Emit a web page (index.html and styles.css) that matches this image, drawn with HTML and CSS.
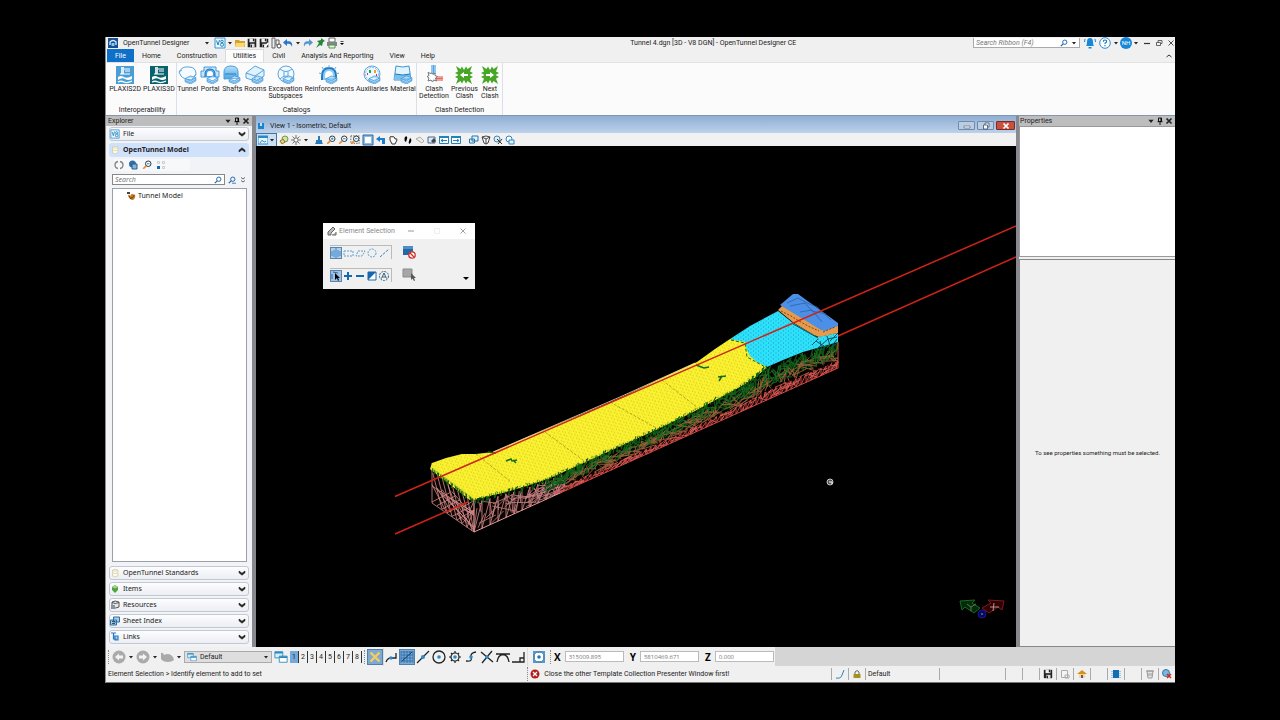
FILE: index.html
```html
<!DOCTYPE html>
<html lang="en">
<head>
<meta charset="utf-8">
<title>Tunnel 4.dgn [3D - V8 DGN] - OpenTunnel Designer CE</title>
<link rel="stylesheet" href="styles.css">
</head>
<body>
<svg class="defs" aria-hidden="true">
  <defs>
    <linearGradient id="sky" x1="0" y1="0" x2="0" y2="1"><stop offset="0" stop-color="#b9e3fa"/><stop offset="1" stop-color="#4ba3e0"/></linearGradient>
    <symbol id="i-caret" viewBox="0 0 6 6"><path d="M1 2h4L3 4.500z" fill="#222"/></symbol>
    <symbol id="i-chev" viewBox="0 0 8 6"><path d="M1 1l3 2.200L7 1v1.800L4 5.200 1 2.800z" fill="#222" stroke="#222" stroke-width=".6"/></symbol>
    <symbol id="i-pin" viewBox="0 0 8 8"><path d="M2.500 1h3v3.500h-3zM1.500 4.700h5M4 5v3" fill="none" stroke="#111"/><path d="M4.500 1h1v3.500h-1z"/></symbol>
    <symbol id="i-x" viewBox="0 0 8 8"><path d="M1.500 1.500l5 5M6.500 1.500l-5 5" stroke="currentColor" stroke-width="var(--w,1.700)" fill="none"/></symbol>
    <symbol id="i-mag" viewBox="0 0 10 10"><circle cx="6" cy="4" r="2.700" fill="none" stroke="#1c64a8" stroke-width="1.200"/><path d="M4 6L1 9" stroke="#1c64a8" stroke-width="1.500"/></symbol>
    <symbol id="i-zoom" viewBox="0 0 12 12"><circle cx="7.500" cy="4.500" r="3.300" fill="#fff" stroke="#27343f" stroke-width="1.200"/><path d="M5 7L1.500 10.500" stroke="#e88a2a" stroke-width="2"/><path d="M6 4.500h3" stroke="#1c7fd0" stroke-width="1.200"/></symbol>
    <symbol id="i-slab" viewBox="0 0 14 10"><path d="M1 4l6-3 6 2-6 3.500zM1 4v2l6 2.500 6-3.500V3M1 6v1.500L7 10l6-3.500V5" fill="#b5def8" stroke="#3c93d8" stroke-width=".8"/></symbol>
    <symbol id="i-burst" viewBox="0 0 20 20"><path d="M2 1l4.500 3L8 1.500l2 3.500 2-3.500L13.500 4 18 1l-2 5.500 3 1.500-3.500 2 3.500 2-3 1.500 2 5.500-4.500-3-1.500 2.500-2-3.500-2 3.500L6.500 16 2 19l2-5.500L1 12l3.500-2L1 8l3-1.500z" fill="#48a626"/></symbol>
    <symbol id="i-save" viewBox="0 0 12 12"><path d="M1 1h10v10H1z" fill="#222"/><path d="M3 1h6v4H3z" fill="#eee"/><path d="M4 7h5v4H4z" fill="#ddd"/><path d="M7 1h1.500v3H7zM4.500 8H6v3H4.500z" fill="#222"/></symbol>
    <symbol id="i-undo" viewBox="0 0 12 10"><path d="M5 1L1 4.500 5 8V5.700h2q2 0 3 3 1-5-3-5.500H5z" fill="#2577c8"/></symbol>
    <symbol id="i-views" viewBox="0 0 16 14"><path d="M1 1h9v7H1z" fill="#d8effb" stroke="#2b8ac4"/><path d="M1 2h9" stroke="#2b8ac4" stroke-width="2"/><path d="M6 6h9v7H6z" fill="#fff" stroke="#2b8ac4"/><path d="M6 7h9" stroke="#2b8ac4" stroke-width="2"/></symbol>
    <symbol id="i-dgn" viewBox="0 0 12 12"><path d="M1 1h10v10H1z" fill="#e9f6fd" stroke="#3a97cc"/><path d="M2.500 3.500L4 8l1.500-5" fill="none" stroke="#2583bd"/><circle cx="8" cy="4.500" r="1.300" fill="none" stroke="#2583bd"/><circle cx="8" cy="7.700" r="1.600" fill="none" stroke="#2583bd"/></symbol>
    <symbol id="i-db" viewBox="0 0 12 12"><path d="M3 2.500q4-2 6.500 0v7q-3 2-6.500 0z" fill="#fdfae8" stroke="#cfcbb0"/><path d="M3 3q3 1.500 6.500 0M3 6q3 1.500 6.500 0" fill="none" stroke="#d9d4b4"/></symbol>
    <symbol id="i-plaxis" viewBox="0 0 20 20"><path d="M1 1h18v18H1z"/><path d="M6 2h3v7H6z" fill="#fff" opacity=".8"/><path d="M9 4h6M10 6h5M5 9h10" stroke="#fff" stroke-width="1"/><path d="M3 12q3-2 6 0t8-1v3q-4 2-7 0t-7 1z" fill="#fff"/><path d="M3 17q3-1.500 6 0t8-1" stroke="#fff" fill="none" stroke-width="1.300"/></symbol>
  </defs>
</svg>

<div class="app">
  <header class="titlebar">
    <div class="quick">
      <svg class="i12" viewBox="0 0 12 12"><path d="M1 1h10v10H1z" fill="#164f8d"/><path d="M3 8V5q3-3 6 0v3" fill="none" stroke="#d7ecff" stroke-width="1.300"/><path d="M4.500 6h3v3h-3z" fill="#8dc5ef"/></svg>
      <span class="picker workflow"><select aria-label="Workflow"><option>OpenTunnel Designer</option></select><svg class="i6"><use href="#i-caret"/></svg></span>
      <svg class="i12"><use href="#i-dgn"/></svg>
      <svg class="i6"><use href="#i-caret"/></svg>
      <svg class="i12" viewBox="0 0 12 12"><path d="M1 3h4l1 1h5v6H1z" fill="#dba02c"/><path d="M2 6h9l-1 4H1z" fill="#fbd76d"/></svg>
      <svg class="i12" viewBox="-1 -1 14 14"><use href="#i-save" width="12" height="12"/></svg>
      <svg class="i12" viewBox="-1 -1 14 14"><use href="#i-save" width="12" height="12"/><path d="M7 11l4-5" stroke="#fff" stroke-width="2"/></svg>
      <svg class="i12" viewBox="0 0 12 12"><path d="M2 1h3v10H2zM6 3h3v5H6z" fill="#eee" stroke="#666"/><circle cx="9" cy="9" r="2" fill="#fff" stroke="#444"/></svg>
      <svg class="i12" viewBox="0 0 12 10"><use href="#i-undo"/></svg>
      <svg class="i6"><use href="#i-caret"/></svg>
      <svg class="i12" viewBox="0 0 12 10"><g transform="matrix(-1 0 0 1 12 0)" opacity=".75"><use href="#i-undo"/></g></svg>
      <svg class="i12" viewBox="0 0 12 12"><path d="M7 1l4 3-2 1-1 4-2-1-4 3 3-5-2-2 4-1z" fill="#26863a"/></svg>
      <svg class="i12" viewBox="0 0 12 12"><path d="M3 1h6v4H3z" fill="#fff" stroke="#666"/><path d="M1 5h10v4H1z" fill="#7b8a86"/><path d="M3 8h6v3H3z" fill="#e6f7df" stroke="#579650"/></svg>
      <svg class="i6" viewBox="0 0 6 6"><path d="M1.500 1.500h3" stroke="#222" stroke-width=".8"/><path d="M1 3h4L3 5z"/></svg>
    </div>
    <h1 class="title">Tunnel 4.dgn [3D - V8 DGN] - OpenTunnel Designer CE</h1>
    <div class="window-tools">
      <div class="ribbon-search"><input type="text" aria-label="Search Ribbon" placeholder="Search Ribbon (F4)"><svg class="i8"><use href="#i-mag"/></svg><svg class="i6"><use href="#i-caret"/></svg></div>
      <svg class="i12" viewBox="0 0 12 12"><path d="M2 9q1-1 1-4 0-4 3-4t3 4q0 3 1 4zM4.500 10h3v1.500h-3z" fill="#1787d8"/><path d="M1 2l-.5 3M11 2l.5 3" stroke="#1787d8"/></svg>
      <svg class="i12" viewBox="0 0 12 12"><circle cx="6" cy="6" r="5.300" fill="#fff" stroke="#2a8dd4"/><path d="M4.300 4.700q0-1.700 1.700-1.700t1.700 1.500Q7.700 5.500 6 6.200V7M6 8v1.200" fill="none" stroke="#1673bd" stroke-width="1.100"/></svg>
      <svg class="i6"><use href="#i-caret"/></svg>
      <span class="avatar">NH</span>
      <svg class="i6"><use href="#i-caret"/></svg>
      <button aria-label="Minimize"><svg class="i8" viewBox="0 0 8 8"><path d="M1 4.500h6" stroke="#333" stroke-width="1.200"/></svg></button>
      <button aria-label="Restore"><svg class="i8" viewBox="0 0 8 8"><path d="M1.500 3.500h4v3h-4zM3 3V1.500h4v3H6" fill="none" stroke="#444" stroke-width=".8"/></svg></button>
      <button aria-label="Close"><svg class="i8 thin"><use href="#i-x"/></svg></button>
    </div>
  </header>

  <nav class="tabs">
    <button class="tab file">File</button><button class="tab">Home</button><button class="tab">Construction</button><button class="tab active">Utilities</button><button class="tab">Civil</button><button class="tab">Analysis And Reporting</button><button class="tab">View</button><button class="tab">Help</button>
    <button class="collapse" aria-label="Collapse ribbon"><svg class="i8" viewBox="0 0 8 8"><path d="M1.500 5L4 3l2.500 2" fill="none" stroke="#333"/></svg></button>
  </nav>

  <section class="ribbon">
    <div class="group inter">
      <div class="tools">
        <button><svg class="i20 p2"><use href="#i-plaxis"/></svg>PLAXIS2D</button>
        <button><svg class="i20 p3"><use href="#i-plaxis"/></svg>PLAXIS3D</button>
      </div>
      <h2>Interoperability</h2>
    </div>
    <div class="group cat">
      <div class="tools">
        <button><svg class="i20" viewBox="0 0 20 20"><path d="M1 7q3-6 10-5 7 0 7 7l-4 6q-9-1-11-4z" fill="#f5fbff" stroke="#5aa5df"/><path d="M1 7l3-2M14 15l4-6" stroke="#5aa5df"/><use href="#i-slab" x="6" y="10" width="13" height="9"/></svg>Tunnel</button>
        <button><svg class="i20" viewBox="0 0 20 20"><path d="M1 6h3V2h12v4h3v6H1z" fill="#c8e7fa" stroke="#4b9bdc"/><path d="M5 12V9q0-5 5-5t5 5v3" fill="#4ba4e4" stroke="#2474b8"/><path d="M7 11V9q0-3 3-3t3 3v2" fill="#fff"/><use href="#i-slab" x="6" y="10" width="13" height="9"/></svg>Portal</button>
        <button><svg class="i20" viewBox="0 0 20 20"><path d="M2 14V7q0-6 7-6t7 6v6z" fill="url(#sky)" stroke="#4b9bdc"/><path d="M3 9h11" stroke="#2b7dc4"/><use href="#i-slab" x="6" y="10" width="13" height="9"/></svg>Shafts</button>
        <button><svg class="i20" viewBox="0 0 20 20"><path d="M1 8l9-7 9 4v6l-9 5-9-3z" fill="#dff2fd" stroke="#5aa5df"/><path d="M1 8l9 3 9-6M10 11v5" fill="none" stroke="#5aa5df"/><use href="#i-slab" x="6" y="10" width="13" height="9"/></svg>Rooms</button>
        <button><svg class="i20" viewBox="0 0 20 20"><circle cx="10" cy="9" r="8" fill="#f2faff" stroke="#5aa5df"/><path d="M4 4q6 5 12 0M4 14q6-6 12 0M8 6.500v5M12 6.500v5" fill="none" stroke="#5aa5df"/><use href="#i-slab" x="6" y="10" width="13" height="9"/></svg>Excavation<br>Subspaces</button>
        <button><svg class="i20" viewBox="0 0 20 20"><path d="M3 15v-4q0-8 7-8t7 8v4" fill="#8dc9f1" stroke="#237bc6" stroke-width="2"/><path d="M10 3V0M5 5L3 2M15 5l2-3M3 9L0 8M17 9l3-1" stroke="#6aaee2"/><path d="M6 13v-2q0-5 4-5t4 5v2" fill="#fff"/><use href="#i-slab" x="6" y="10" width="13" height="9"/></svg>Reinforcements</button>
        <button><svg class="i20" viewBox="0 0 20 20"><circle cx="10" cy="9" r="8" fill="#eef8ff" stroke="#5aa5df"/><circle cx="10" cy="9" r="6.500" fill="none" stroke="#8bbde1" stroke-dasharray="2 1"/><path d="M7 5h2v3H7z" fill="#2da54b"/><path d="M12 5h2v3h-2z" fill="#e3a52b"/><path d="M5 8h1v2H5zM14 9h1v2h-1z" fill="#d23b3b"/><use href="#i-slab" x="6" y="10" width="13" height="9"/></svg>Auxiliaries</button>
        <button><svg class="i20" viewBox="0 0 20 20"><path d="M3 1q7 2 13 0l2 14H1z" fill="#e1f3fd" stroke="#3d95d5"/><path d="M2 9q8 2 15 0l1 6H1z" fill="#7cc0ee"/><path d="M2 9q8 2 15 0" fill="none" stroke="#2176b8"/><use href="#i-slab" x="7" y="10" width="13" height="9"/></svg>Material</button>
      </div>
      <h2>Catalogs</h2>
    </div>
    <div class="group clash">
      <div class="tools">
        <button><svg class="i20" viewBox="0 0 20 20"><path d="M7 0h5v9H7z" fill="#8fc8ee"/><path d="M9.500 0v9" stroke="#5aa5df"/><path d="M11 11h8v5h-8z" fill="#f2a19a"/><path d="M11 13.500h8" stroke="#dd6c66"/><path d="M8 8l1 1.500L11 8l0 2.500 2.500 1-2 1.500 1 3-3-1-1 2-1.500-2-3 1 1-3-2-1.500 2-1-1-3 3 1z" fill="#fff" stroke="#777"/></svg>Clash<br>Detection</button>
        <button><svg class="i20" viewBox="0 0 20 20"><use href="#i-burst"/><path d="M6 10l4-3v2h4v2h-4v2z" fill="#fff"/></svg>Previous<br>Clash</button>
        <button><svg class="i20" viewBox="0 0 20 20"><use href="#i-burst"/><path d="M14 10l-4-3v2H6v2h4v2z" fill="#fff"/></svg>Next<br>Clash</button>
      </div>
      <h2>Clash Detection</h2>
    </div>
  </section>

  <main class="work">
    <aside class="explorer">
      <div class="pane-head"><h2>Explorer</h2><svg class="i8" viewBox="0 0 6 6"><use href="#i-caret"/></svg><svg class="i8"><use href="#i-pin"/></svg><svg class="i8"><use href="#i-x"/></svg></div>
      <div class="explorer-body">
        <button class="bar"><svg class="i10"><use href="#i-dgn"/></svg><span>File</span><svg class="i8"><use href="#i-chev"/></svg></button>
        <button class="bar open"><svg class="i10"><use href="#i-db"/></svg><span>OpenTunnel Model</span><svg class="i8 flip"><use href="#i-chev"/></svg></button>
        <div class="model-tools">
          <svg class="i10" viewBox="0 0 10 10"><path d="M4 1.500Q1 2 1 5t3 3.500M6 8.500Q9 8 9 5T6 1.500" fill="none" stroke="#888" stroke-width="1.300"/></svg>
          <svg class="i10" viewBox="0 0 10 10"><circle cx="4.500" cy="4" r="3.500" fill="#2d6fab"/><path d="M4 4h5v5H4z" fill="#88b4d9" stroke="#315a85"/></svg>
          <svg class="i10" viewBox="0 0 12 12"><use href="#i-zoom"/></svg>
          <svg class="i10" viewBox="0 0 10 10"><path d="M1 6h3v3H1z" fill="#1667b0"/><path d="M1.500 1.500h2v2h-2zM6.500 1.500h2v2h-2zM6.500 6.500h2v2h-2z" fill="none" stroke="#c7cdd3"/></svg>
        </div>
        <div class="model-search">
          <div class="search-box"><input type="text" aria-label="Search model" placeholder="Search"><svg class="i8" viewBox="0 0 10 10"><use href="#i-mag"/></svg></div>
          <svg class="i8" viewBox="0 0 10 10"><use href="#i-mag"/><path d="M5 9h5" stroke="#1c64a8"/></svg>
          <svg class="i8" viewBox="0 0 8 8"><path d="M2 1.500l2 1.500 2-1.500M2 4.500L4 6l2-1.500" fill="none" stroke="#444" stroke-width=".8"/></svg>
        </div>
        <div class="tree"><svg class="i10" viewBox="0 0 10 10"><path d="M1 1h3v2H1z" fill="#444"/><path d="M2 4q2-1 2 1 2-3 3-2l1 1 1-1q1 4-2 6-4 0-5-5z" fill="#c87d2a"/><path d="M5 7q2 1 3-3M3 5l2 3" stroke="#6f3e12" fill="none"/></svg>Tunnel Model</div>
        <div class="bars">
          <button class="bar"><svg class="i10"><use href="#i-db"/></svg><span>OpenTunnel Standards</span><svg class="i8"><use href="#i-chev"/></svg></button>
          <button class="bar"><svg class="i10" viewBox="0 0 10 10"><path d="M2 3l3-2 3 2v3L5 9 2 6z" fill="#54a23e"/><path d="M2 3l3 1.500L8 3 5 1z" fill="#a3d58f"/></svg><span>Items</span><svg class="i8"><use href="#i-chev"/></svg></button>
          <button class="bar"><svg class="i10" viewBox="0 0 10 10"><path d="M2 2q3-2 7 0v5q-3 2-7 0z" fill="#e5e8eb" stroke="#555"/><path d="M2 2.500q3 2 7 0" fill="none" stroke="#555"/><path d="M1 5h4v4H1z" fill="#8a939d"/></svg><span>Resources</span><svg class="i8"><use href="#i-chev"/></svg></button>
          <button class="bar"><svg class="i10" viewBox="0 0 10 10"><path d="M3.500 1h6v5h-6zM.5 4h6v5h-6z" fill="#a8cdea" stroke="#2f6e9f"/><path d="M2 5.500h3M2 7.500h3" stroke="#23527a"/></svg><span>Sheet Index</span><svg class="i8"><use href="#i-chev"/></svg></button>
          <button class="bar"><svg class="i10" viewBox="0 0 10 10"><path d="M1 1h5M3.500 1v6h3M5 4h3v4H5z" fill="#acd2f3" stroke="#2b78c2" stroke-width="1.200"/></svg><span>Links</span><svg class="i8"><use href="#i-chev"/></svg></button>
        </div>
      </div>
    </aside>

    <section class="view">
      <div class="view-head">
        <svg class="i8" viewBox="0 0 8 8"><path d="M1 1h6v6H1z" fill="#1c83cf"/><path d="M3 1h2v3H3z" fill="#bfe2f8"/></svg>
        <h2>View 1 - Isometric, Default</h2>
        <button aria-label="Minimize view"><svg class="i8" viewBox="0 0 8 8"><path d="M1 4h6v2H1z" fill="#fff" stroke="#566b85" stroke-width=".7"/></svg></button>
        <button aria-label="Restore view"><svg class="i8" viewBox="0 0 8 8"><path d="M1.500 3h4v4h-4zM3 3V1h4v4H6" fill="#fff" stroke="#3d516b" stroke-width=".8"/></svg></button>
        <button class="close" aria-label="Close view"><svg class="i8"><use href="#i-x"/></svg></button>
      </div>
      <div class="view-tools">
        <span class="pair"><svg class="i10" viewBox="0 0 10 10"><path d="M0 1h10v8H0z" fill="#e7f5fd" stroke="#2b87c7"/><path d="M0 2h10" stroke="#2b87c7" stroke-width="2"/><path d="M2 8q2-4 3-2t3 0" fill="none" stroke="#2b87c7"/></svg><svg class="i6"><use href="#i-caret"/></svg></span>
        <svg class="i10" viewBox="0 0 10 10"><circle cx="6" cy="4" r="3" fill="#cfe3a0" stroke="#7b9554"/><path d="M1 6l3-2 2 3-3 2z" fill="#f0d36b" stroke="#86793c"/></svg>
        <svg class="i10" viewBox="0 0 10 10"><circle cx="5" cy="5" r="2.200" fill="#fff" stroke="#555"/><path d="M5 0v2M5 8v2M0 5h2M8 5h2M1.500 1.500l1.500 1.500M7 7l1.500 1.500M8.500 1.500L7 3M3 7L1.500 8.500" stroke="#777"/></svg>
        <svg class="i6"><use href="#i-caret"/></svg><i></i>
        <svg class="i10" viewBox="0 0 10 10"><path d="M4 1h2v4h2v2l1 2H1l1-2V5h2z" fill="#2a7ab9"/></svg>
        <svg class="i10" viewBox="0 0 12 12"><use href="#i-zoom"/><path d="M7.500 3v3" stroke="#1c7fd0"/></svg>
        <svg class="i10" viewBox="0 0 12 12"><use href="#i-zoom"/></svg>
        <svg class="i10" viewBox="0 0 12 12"><path d="M1 1h10v9H1z" fill="none" stroke="#444" stroke-dasharray="1.500"/><use href="#i-zoom"/></svg>
        <svg class="i12" viewBox="0 0 12 12"><path d="M1 1h10v10H1z" fill="#8dbbe6" stroke="#2f66a3"/><path d="M3 3h6v6H3z" fill="#fff"/></svg>
        <svg class="i10" viewBox="0 0 10 10"><path d="M4 1L0 4l4 3V5h2v4h3V3H4z" fill="#1d7dc8"/></svg>
        <svg class="i10" viewBox="0 0 10 10"><path d="M2 5V2q1-1 2 0 1-1 2 0t1 2q2-1 2 1L7 9H4z" fill="#fff" stroke="#333"/></svg><i></i>
        <svg class="i10" viewBox="0 0 10 10"><path d="M3 1q2 1 1 3L3 7Q1 6 1.500 3zM7 3q2 1 1 4L6.500 9Q5 8 6 6z"/></svg>
        <svg class="i10" viewBox="0 0 10 10"><path d="M1 4l4-2 4 4-2 2z" fill="#eee" stroke="#aaa"/></svg>
        <svg class="i10" viewBox="0 0 10 10"><path d="M1 2h7v6H1z" fill="#dceaf7" stroke="#44688c"/><path d="M4 6l3-3 2 3-3 2z" fill="#444"/></svg>
        <svg class="i10" viewBox="0 0 10 10"><path d="M.5 1.500h9v7h-9z" fill="#fff" stroke="#2581ba"/><path d="M0 2h10" stroke="#2581ba" stroke-width="2"/><path d="M2 5.500h6M4 4L2 5.500 4 7" fill="none" stroke="#2581ba"/></svg>
        <svg class="i10" viewBox="0 0 10 10"><path d="M.5 1.500h9v7h-9z" fill="#fff" stroke="#2581ba"/><path d="M0 2h10" stroke="#2581ba" stroke-width="2"/><path d="M2 5.500h6M6 4l2 1.500L6 7" fill="none" stroke="#2581ba"/></svg><i></i><i></i>
        <svg class="i10" viewBox="0 0 10 10"><path d="M3 1h6v5H3zM.5 4h5v4h-5z" fill="#e3f1fa" stroke="#2475ac"/></svg>
        <svg class="i10" viewBox="0 0 10 10"><path d="M1 2l4-1 4 1-2 6-2 1-2-1zM1 2l4 2 4-2M5 4v5" fill="#fff" stroke="#444"/></svg>
        <svg class="i10" viewBox="0 0 10 10"><circle cx="4" cy="4" r="3" fill="#d9eefa" stroke="#4a83ab"/><path d="M4 4l5 5M9 4L5 9" stroke="#333"/></svg>
        <svg class="i10" viewBox="0 0 10 10"><circle cx="4" cy="4" r="3" fill="#fff" stroke="#3385bd"/><path d="M4 5h5v4H4z" fill="#e4f3fc" stroke="#3385bd"/></svg>
      </div>
      <div class="canvas">
        <svg class="scene" viewBox="256 146 760 500" preserveAspectRatio="xMinYMin meet" role="img" aria-label="Isometric tunnel model">
          <defs>
            <pattern id="grain" width="5" height="4" patternUnits="userSpaceOnUse" patternTransform="rotate(-24)"><path d="M0 1h1M3 3h1" stroke="#8a8b16" stroke-width=".7" opacity=".75"/></pattern>
            <pattern id="ripple" width="5" height="4" patternUnits="userSpaceOnUse"><path d="M1 0v2M3.500 2v2" stroke="#138fa8" stroke-width=".6" opacity=".7"/></pattern>
          </defs>
          <path d="M432 463l0 40 42 29 364-164v-45l-70 44-120 66-175 66z" fill="#070402"/>
          <g id="mesh"></g>
          <path d="M432 463l14-5 16-4 14 0 17-2 37-16 88-37 42-20 37-17 18-13 15-10 20 2 6 16 11 10-11 10-16 10-47 25-33 16-70 32-40 18-27 9-21 6-32 7-40-31z" fill="#fbf12f"/>
          <path d="M432 463l14-5 16-4 14 0 17-2 37-16 88-37 42-20 37-17 18-13 15-10 20 2 6 16 11 10-11 10-16 10-47 25-33 16-70 32-40 18-27 9-21 6-32 7-40-31z" fill="url(#grain)"/>
          <path d="M730 339l20-13 28-15 15 12 24 14 21-4v9l-35 10-20 8-16 7-10-5-7-6-3-6-2-8z" fill="#2de0fb"/>
          <path d="M730 339l20-13 28-15 15 12 24 14 21-4v9l-35 10-20 8-16 7-10-5-7-6-3-6-2-8z" fill="url(#ripple)"/>
          <path d="M778 310l6-6 39 24 15-5v10l-19 4-5-2-20-12z" fill="#e69a4c"/>
          <path d="M793 294h5l40 29v3l-13 5-4-1-41-25z" fill="#4c8fe6"/>
          <path d="M787 303l11-5 9 5 10 4 14 13M790 306l15-3 7 8 14 3M800 312l12-2 10 12" fill="none" stroke="#2b62ad" stroke-width=".8"/>
          <path d="M781 311l10 5 8 5 9 5 11 5M823 332l12-5" fill="none" stroke="#7a4a18" stroke-dasharray="2 1.500"/>
          <path d="M793 324l9 5 16 9M818 348l10-9 9-2M816 341l8 5M827 336l3 9M838 333l-8 8M812 345l6-6M822 350l-2-9M832 346l5-7" fill="none" stroke="#0b5663"/>
          <g id="fringe"></g>
          <path d="M731 340l14 3 2 14 20 11" fill="none" stroke="#0f6b1b" stroke-width="1" stroke-dasharray="3 2"/>
          <path d="M476 454l35 28M545 432l42 31M610 402l48 27M662 380l36 28" fill="none" stroke="#97921c" stroke-width=".7" stroke-dasharray="3 1.500"/>
          <path d="M506 461l5-2 1 2 5-1M513 460l3 3M696 365l8 3 5-1M718 377l8-1M722 376l-3 5M488 452l8 1" stroke="#136b1e" stroke-width="1.500" fill="none"/>
          <path d="M493 452l127-55 75-34" stroke="#f2e6c2" stroke-width=".8" fill="none"/>
          <g stroke="#ce2418" stroke-width="1.500"><path d="M395 496.500L1016 226M395 534l73-32M838 336l178-79"/></g>
          <g fill="none"><path d="M960 601l15-1-3 3 8 5-6 5-9-6-3 3z" fill="#06290a" stroke="#156a20"/><path d="M967 604l4 3 5-3M971 607v4" stroke="#5f9566" stroke-width=".8"/><path d="M1004 601l-16-1 3 3-9 5 7 5 9-6 4 3z" fill="#2b0505" stroke="#85151b"/><path d="M990 607h9M994 603l-1 8" stroke="#c98a8a"/><circle cx="982" cy="614" r="4" fill="#0a0a4e" stroke="#17179c"/><circle cx="982" cy="614" r="1" fill="#5b66d0"/></g>
          <circle cx="830" cy="482" r="3" fill="#555" stroke="#c9c9c9"/><path d="M829 482h3v2" stroke="#fff" fill="none"/>
        </svg>

        <div class="dialog" role="dialog" aria-label="Element Selection">
          <div class="dialog-head">
            <svg class="i10" viewBox="0 0 10 10"><path d="M1 9V6l5-5 2 2-4 4v2zM5 9h4V6" fill="#bbb" stroke="#666"/></svg>
            <h2>Element Selection</h2>
            <button aria-label="Minimize dialog"><svg class="i8" viewBox="0 0 8 8"><path d="M1 4h6" stroke="#999"/></svg></button>
            <button aria-label="Maximize dialog"><svg class="i8" viewBox="0 0 8 8"><path d="M1.500 1.500h5v5h-5z" fill="none" stroke="#eee"/></svg></button>
            <button aria-label="Close dialog"><svg class="i8 thin grey"><use href="#i-x"/></svg></button>
          </div>
          <div class="dialog-body">
            <div class="strip">
              <svg class="i12 on" viewBox="0 0 12 12"><path d="M2 4v5M4 3v7M6 1v10M8 3v7M10 4v5" stroke="#3c86c5"/></svg>
              <svg class="i12" viewBox="0 0 12 12"><path d="M2 4h9v5H2z" fill="none" stroke="#5a9fd2" stroke-dasharray="2 1"/></svg>
              <svg class="i12" viewBox="0 0 12 12"><path d="M4 4h7L8 9H2z" fill="none" stroke="#5a9fd2" stroke-dasharray="2 1"/></svg>
              <svg class="i12" viewBox="0 0 12 12"><circle cx="6" cy="6" r="4" fill="none" stroke="#5a9fd2" stroke-dasharray="2 1"/></svg>
              <svg class="i12" viewBox="0 0 12 12"><path d="M2 10l9-8" stroke="#3a88c4" stroke-dasharray="3 1"/></svg>
            </div>
            <svg class="i14" viewBox="0 0 14 14"><path d="M1 1h10v9H1z" fill="#2469a5"/><path d="M1 1h10v3H1z" fill="#4f8fc4"/><circle cx="10" cy="10" r="3.200" fill="#fff" stroke="#d03028" stroke-width="1.300"/><path d="M8 8l4 4" stroke="#d03028" stroke-width="1.300"/></svg>
            <span></span>
            <div class="strip">
              <svg class="i12 on dark" viewBox="0 0 12 12"><path d="M3 2l5 1M2 4v5" stroke="#2a6ba6"/><path d="M5 3v7l2-2 1 3 1-1-1-2h2z"/></svg>
              <svg class="i12" viewBox="0 0 12 12"><path d="M6 2v8M2 6h8" stroke="#1668ac" stroke-width="2"/></svg>
              <svg class="i12" viewBox="0 0 12 12"><path d="M2 6h8" stroke="#1668ac" stroke-width="2"/></svg>
              <svg class="i12" viewBox="0 0 12 12"><path d="M2 2h8v8H2z" fill="#fff" stroke="#1668ac"/><path d="M2 2h8L2 10z" fill="#1668ac"/></svg>
              <svg class="i12" viewBox="0 0 12 12"><circle cx="6" cy="6" r="4.500" fill="none" stroke="#34617f" stroke-dasharray="2 1"/><path d="M3.500 8.500L6 3l2.500 5.500M4.500 7h3" fill="none" stroke="#34617f"/></svg>
            </div>
            <svg class="i14" viewBox="0 0 14 14"><path d="M1 1h9v8H1z" fill="#a6a6a6" stroke="#8b8b8b"/><path d="M9 5v7l1.500-1.500L12 13l1-.5-1-2.500h2z" fill="#555"/></svg>
            <svg class="i8 more" viewBox="0 0 8 8"><path d="M1 3h6L4 6z"/></svg>
          </div>
        </div>
      </div>
    </section>

    <aside class="properties">
      <div class="pane-head"><h2>Properties</h2><svg class="i8" viewBox="0 0 6 6"><use href="#i-caret"/></svg><svg class="i8"><use href="#i-pin"/></svg><svg class="i8"><use href="#i-x"/></svg></div>
      <div class="prop-top"></div>
      <div class="prop-main">To see properties something must be selected.</div>
    </aside>
  </main>

  <footer>
    <div class="snapbar">
      <div class="snap-left">
        <b class="grip"></b>
        <button aria-label="Back"><svg class="i14" viewBox="0 0 14 14"><circle cx="7" cy="7" r="6.500" fill="#aaa"/><path d="M3 7l4-3.500v2h4v3H7v2z" fill="#f3f3f3"/></svg></button><svg class="i6"><use href="#i-caret"/></svg>
        <button aria-label="Forward"><svg class="i14" viewBox="0 0 14 14"><circle cx="7" cy="7" r="6.500" fill="#aaa"/><path d="M11 7L7 3.500v2H3v3h4v2z" fill="#f3f3f3"/></svg></button><svg class="i6"><use href="#i-caret"/></svg>
        <svg class="i14" viewBox="0 0 14 14"><path d="M1 3q2-1 3 2 4-2 7 0 3 2 3 5-2 2-6 2-5 0-7-3z" fill="#aaa"/></svg><svg class="i6"><use href="#i-caret"/></svg>
        <div class="picker group-pick"><svg class="i10" viewBox="0 0 16 14"><use href="#i-views"/></svg><select aria-label="View group"><option>Default</option></select><svg class="i6"><use href="#i-caret"/></svg></div>
        <svg class="i14" viewBox="0 0 16 14"><use href="#i-views"/></svg>
        <div class="nums"><button class="on">1</button><button>2</button><button>3</button><button>4</button><button>5</button><button>6</button><button>7</button><button>8</button></div>
        <b class="grip"></b>
      </div>
      <div class="snaps">
        <svg class="i16 on" viewBox="0 0 16 16"><path d="M3.500 3.500l9 9M12.500 3.500l-9 9" stroke="#f4cd61" stroke-width="2.400"/></svg>
        <b class="sep"></b>
        <svg class="i16" viewBox="0 0 16 16"><path d="M3 13q2-5 6-4h4V4" fill="none" stroke="#222" stroke-width="1.300"/><circle cx="8" cy="9" r="1.700" fill="#2c88cf"/></svg>
        <svg class="i16 on" viewBox="0 0 16 16"><path d="M2 2v12M5 2v12M8 2v12M11 2v12M14 2v12M2 3h12M2 6h12M2 9h12M2 12h12" stroke="#236ba9" stroke-width=".8"/><path d="M3 12L13 3" stroke="#123e64"/></svg>
        <svg class="i16" viewBox="0 0 16 16"><path d="M2 14L14 2" stroke="#222" stroke-width="1.300"/><circle cx="8" cy="8" r="2" fill="#2c88cf"/></svg>
        <svg class="i16" viewBox="0 0 16 16"><circle cx="8" cy="8" r="6" fill="none" stroke="#222" stroke-width="1.300"/><circle cx="8" cy="8" r="1.800" fill="#2c88cf"/></svg>
        <svg class="i16" viewBox="0 0 16 16"><circle cx="8" cy="8" r="4" fill="none" stroke="#222" stroke-width="1.200"/><circle cx="8" cy="8" r="1.800" fill="#2c88cf"/><path d="M8 2v2M8 12v2M2 8h2M12 8h2M4 4l1 1M11 11l1 1M12 4l-1 1M5 11l-1 1" stroke="#222" stroke-width="1.200"/></svg>
        <svg class="i16" viewBox="0 0 16 16"><path d="M3 12q7 1 5-4-1-4 5-5" fill="none" stroke="#222" stroke-width="1.300"/><circle cx="8" cy="8" r="1.800" fill="#2c88cf"/></svg>
        <svg class="i16" viewBox="0 0 16 16"><path d="M2 3l12 10M13 2L3 14" stroke="#222" stroke-width="1.300"/><circle cx="8" cy="8" r="1.800" fill="#2c88cf"/></svg>
        <svg class="i16" viewBox="0 0 16 16"><path d="M1 5h14M2 13q1-7 6-7.500 5 .5 6 7.500" fill="none" stroke="#222" stroke-width="1.300"/></svg>
        <svg class="i16" viewBox="0 0 16 16"><path d="M1 13h12V3M9 13V9h4" fill="none" stroke="#222" stroke-width="1.300"/></svg>
        <b class="sep"></b>
        <svg class="i16 wide" viewBox="0 0 16 16"><path d="M3 3h10v10H3z" fill="#fff" stroke="#27699d" stroke-width="1.500"/><path d="M2 2h3v3H2zM11 2h3v3h-3zM2 11h3v3H2zM11 11h3v3h-3z" fill="#4e9cd4"/><circle cx="8" cy="8" r="1.800" fill="#2477b8"/></svg>
        <b class="grip"></b>
      </div>
      <div class="coords">
        <label>X<input type="text" value="315009.895"></label>
        <label>Y<input type="text" value="5810469.671"></label>
        <label>Z<input type="text" value="0.000"></label>
      </div>
      <div class="snap-rest"></div>
    </div>
    <div class="status">
      <div class="prompt">Element Selection &gt; Identify element to add to set</div>
      <div class="message"><svg class="i10" viewBox="0 0 10 10"><circle cx="5" cy="5" r="4.500" fill="#b51c1c"/><path d="M3 3l4 4M7 3L3 7" stroke="#fff" stroke-width="1.300"/></svg><span>Close the other Template Collection Presenter Window first!</span></div>
      <div class="cell"><svg class="i10" viewBox="0 0 10 10"><path d="M1 9q5 1 6-3L9 1" fill="none" stroke="#2a83bf"/></svg></div>
      <div class="cell"><svg class="i10" viewBox="0 0 10 10"><path d="M3 5V3q2-3 4 0v2" fill="none" stroke="#666"/><path d="M1.500 5h7v4h-7z" fill="#a5921e"/></svg></div>
      <div class="cell level">Default</div>
      <div class="cell blank"></div>
      <div class="cell"></div><div class="cell"></div>
      <div class="cell"><svg class="i10" viewBox="0 0 12 12"><use href="#i-save"/></svg></div>
      <div class="cell"><svg class="i10" viewBox="0 0 10 10"><path d="M1.500 1.500h6v7h-6zM5 6h4v3H5z" fill="#f4f4f4" stroke="#aaa"/></svg></div>
      <div class="cell"><svg class="i10" viewBox="0 0 10 10"><path d="M0 5l5-4 5 4z" fill="#db8f1b"/><path d="M2 5h6v4H2z" fill="#f8d58c"/><path d="M4 6h2v3H4z" fill="#49628a"/></svg></div>
      <div class="cell"></div>
      <div class="cell"><svg class="i10" viewBox="0 0 10 10"><path d="M2 1h6v8H2z" fill="#126eb5"/><path d="M1 2v7M9 2v7" stroke="#4f9ed6" stroke-dasharray="1"/></svg></div>
      <div class="cell"></div>
      <div class="cell"><svg class="i10" viewBox="0 0 10 10"><path d="M2 2h6L7 9H3zM1 2h8M4 4v3M6 4v3" fill="#e5e5e5" stroke="#999"/></svg></div>
      <div class="cell"><svg class="i10" viewBox="0 0 10 10"><circle cx="4" cy="4" r="3.500" fill="#77b7e4" stroke="#34759f"/><path d="M5 5l4 4M9 5L5 9" stroke="#c92a22" stroke-width="1.500"/></svg></div>
    </div>
  </footer>
</div>
<script src="mesh.js"></script>
</body>
</html>
```
FILE: styles.css
```css
* { box-sizing: border-box; }
body {
  margin: 0;
  height: 100vh;
  padding: 37px 105px;
  background: #000;
  color: #222;
  font: 7px/8px Roboto, "Liberation Sans", sans-serif;
}
h1, h2 { margin: 0; font: inherit; }
button { margin: 0; padding: 0; border: 0; background: none; font: inherit; color: inherit; }
input, select { margin: 0; padding: 0; border: 0; background: none; font: inherit; color: inherit; min-width: 0; }
select { appearance: none; flex: 1; }
svg { display: block; flex: none; }
.defs { position: absolute; width: 0; height: 0; }
.i6 { width: 6px; height: 6px; }
.i8 { width: 8px; height: 8px; }
.i10 { width: 10px; height: 10px; }
.i12 { width: 12px; height: 12px; }
.i14 { width: 14px; height: 14px; }
.i16 { width: 16px; height: 16px; }
.i20 { width: 20px; height: 20px; }
.thin { --w: 0.8; }
.grey { color: #888; }
.flip { transform: rotate(180deg); }
.picker { display: flex; align-items: center; }

.app { display: flex; flex-direction: column; height: 100%; background: #f0f0f0; border-left: 1px solid #8d8d8d; }

.titlebar { display: grid; grid-template-columns: 18fr auto 13fr; align-items: center; height: 12px; }
.quick { display: flex; align-items: center; padding-left: 1px; }
.workflow { width: 87px; height: 10px; margin: 0 4px; }
.quick > .i6 { margin: 0 1px; }
.window-tools { display: flex; align-items: center; justify-content: flex-end; gap: 1px; }
.window-tools > .i12 { width: 14px; height: 12px; }
.window-tools button { width: 8px; margin-left: 3px; }
.ribbon-search { display: flex; align-items: center; width: 107px; height: 10px; margin-right: 2px; padding: 0 2px; gap: 3px; background: #fff; border: 1px solid #aaa; border-top: 0; }
.ribbon-search input { flex: 1; }
::placeholder { color: #777; opacity: 1; font-style: italic; }
.avatar { width: 12px; height: 12px; border-radius: 50%; background: #1787d8; color: #fff; font-size: 6px; line-height: 12px; text-align: center; }

.tabs { display: flex; height: 14px; padding-left: 1px; align-items: flex-end; border-bottom: 1px solid #e2e2e2; }
.tab { height: 13px; padding: 0 8px; }
.tab.file { background: #0e70c8; color: #fff; }
.tab.active { background: #fcfcfc; border: 1px solid #dcdcdc; border-bottom: 0; padding: 0 7px; }
.collapse { margin-left: auto; padding: 2px; }

.ribbon { display: flex; height: 52px; padding-left: 2px; background: #fbfbfb; }
.group { display: flex; flex-direction: column; justify-content: space-between; align-items: center; padding: 2px 1px 1px; border-right: 1px solid #dadfea; }
.inter { width: 69px; }
.cat { width: 240px; }
.clash { width: 86px; }
.tools { display: flex; align-items: flex-start; }
.tools button { display: flex; flex-direction: column; align-items: center; padding: 0 1px; line-height: 7px; }
.tools svg { margin-bottom: 1px; }
.inter .tools { gap: 2px; }
.inter .tools button { padding: 0; }
.p2 { fill: #4a9dd5; }
.p3 { fill: #08636e; }

.work { flex: 1; display: grid; grid-template-columns: 146px 1fr 156px; min-height: 0; border-top: 1px solid #8296ad; }
.pane-head { display: flex; align-items: center; gap: 1px; height: 10px; padding: 0 2px; background: #bdbdbd; }
.pane-head h2 { flex: 1; }
.explorer { display: flex; flex-direction: column; background: #f2f3f6; min-height: 0; }
.explorer-body { flex: 1; display: flex; flex-direction: column; gap: 2px; padding: 1px 3px 3px; font-family: "Noto Sans", sans-serif; min-height: 0; }
.bar { display: flex; align-items: center; gap: 3px; width: 100%; height: 14px; padding: 0 2px 0 0; background: linear-gradient(#fdfdfe, #ebeef3); border: 1px solid #c3c8d1; border-radius: 3px; text-align: left; }
.bar span { flex: 1; }
.bar.open { background: #cfe1fb; border-color: #cfe1fb; font-weight: bold; }
.model-tools { display: flex; gap: 4px; width: 76px; height: 12px; margin: 0 5px; align-items: center; background: #f7f8fa; }
.model-search { display: flex; align-items: center; gap: 3px; height: 13px; padding-right: 2px; }
.search-box { flex: 1; display: flex; align-items: center; height: 11px; margin-left: 3px; padding: 0 2px; background: #fff; border: 1px solid #888; }
.search-box input { flex: 1; width: 0; }
.tree { flex: 1; display: flex; align-items: flex-start; gap: 2px; margin: 0 2px 2px 3px; padding: 2px 13px; background: #fff; border: 1px solid #9a9fa8; line-height: 10px; }
.bars { display: flex; flex-direction: column; gap: 2px; }

.view { display: flex; flex-direction: column; min-width: 0; border: solid #87898f; border-width: 0 3px 0 4px; }
.view-head { display: flex; align-items: center; gap: 2px; height: 17px; padding: 2px 1px 0; background: linear-gradient(#8faed3, #bdd1ea); }
.view-head h2 { flex: 1; padding-left: 3px; }
.view-head button { display: flex; justify-content: center; align-items: center; width: 17px; height: 9px; border: 1px solid #7289a8; border-radius: 1px; background: #b9cde5; }
.view-head .close { width: 19px; background: #c9503d; border-color: #7b2c22; color: #fff; }
.view-tools { display: flex; align-items: center; gap: 2px; height: 13px; background: #f1f1f1; }
.view-tools i { width: 1px; }
.pair { display: flex; align-items: center; gap: 1px; padding: 1px; background: #c9dff4; border: 1px solid #45749f; }
.canvas { position: relative; flex: 1; min-height: 0; background: #000; overflow: hidden; }
.scene { width: 100%; height: 100%; }

.dialog { position: absolute; left: 67px; top: 77px; width: 152px; background: #f0f0f0; }
.dialog-head { display: flex; align-items: center; gap: 2px; height: 16px; padding: 0 8px 0 4px; background: #fff; color: #888; }
.dialog-head h2 { flex: 1; white-space: nowrap; }
.dialog-head button { width: 24px; display: flex; justify-content: flex-end; }
.dialog-head button:first-of-type { width: 8px; }
.dialog-body { display: grid; grid-template-columns: 62px 14px 1fr; column-gap: 10px; row-gap: 9px; padding: 6px 5px 7px 7px; align-items: center; }
.strip { display: flex; height: 14px; padding: 1px 0; border: solid #bbb; border-width: 1px 1px 0 0; }
.strip .on { background: #b1cde8; outline: 1px solid #5786b0; outline-offset: -1px; }
.strip .dark { background: #a4c3e0; }
.more { justify-self: end; align-self: end; }

.properties { display: flex; flex-direction: column; background: #f0f0f0; }
.properties .pane-head { padding-left: 1px; }
.prop-top { flex: 129; background: #fff; border: 1px solid #999; border-width: 1px 0 1px 1px; }
.prop-main { flex: 388; display: flex; justify-content: center; align-items: center; margin-top: 2px; border: 1px solid #888; border-right: 0; font-size: 6px; }

.snapbar { display: flex; height: 19px; background: #f0f0f0; }
.snap-left, .snaps { display: flex; align-items: center; gap: 2px; }
.snap-left { width: 261px; padding: 0 1px 0 2px; }
.grip { width: 2px; height: 14px; border-left: 1px dotted #888; }
.sep { width: 1px; height: 18px; background: #ddd; }
.group-pick { flex: 1; gap: 3px; height: 12px; padding: 0 2px; background: #dedede; border: 1px solid #aaa; }
.nums { display: flex; }
.nums button { width: 9px; height: 12px; border-right: 1px solid #333; }
.nums .on { background: #74a9dc; }
.snaps { gap: 0; width: 184px; }
.snaps .on { background: #7ea9d1; outline: 1px solid #4e7fae; outline-offset: -1px; }
.snaps .wide { margin: 0 3px; }
.coords { display: flex; align-items: center; gap: 6px; padding: 0 1px 0 3px; }
.coords label { display: flex; align-items: center; gap: 4px; font: bold 10px/10px "Open Sans", sans-serif; color: #000; }
.coords input { width: 59px; height: 11px; padding: 0 3px; background: #fff; border: 1px solid #bbb; font: 6px/9px "Open Sans", sans-serif; color: #777; }
.snap-rest { flex: 1; background: #d5d5d5; }

.status { display: flex; align-items: center; height: 17px; padding-bottom: 1px; border-bottom: 1px solid #777; }
.prompt { flex: 424; padding-left: 2px; }
.message { flex: 304; display: flex; align-items: center; gap: 4px; height: 14px; padding-left: 2px; border-left: 1px dotted #888; }
.cell { display: flex; justify-content: center; align-items: center; width: 17px; height: 12px; border-left: 1px solid #aaa; }
.cell.level { width: 74px; justify-content: flex-start; padding-left: 2px; }
.cell.blank { width: 66px; }
```
FILE: mesh.js
```javascript
// Draws the triangulated side faces of the ground model.
(function () {
  const NS = 'http://www.w3.org/2000/svg';
  let seed = 7;
  const rnd = () => (seed = (seed * 16807) % 2147483647) / 2147483647;
  const edge = (pts) => (x) => {
    for (let i = 1; i < pts.length; i++) {
      if (x <= pts[i][0]) {
        const [a, b] = [pts[i - 1], pts[i]];
        return a[1] + (b[1] - a[1]) * (x - a[0]) / (b[0] - a[0]);
      }
    }
    return pts[pts.length - 1][1];
  };
  const top = edge([[473, 500], [523, 487], [550, 478], [590, 460], [660, 428], [693, 412], [740, 387], [767, 367], [803, 352], [838, 342]]);
  const bottom = edge([[474, 532], [838, 368]]);
  const add = (id, d, color, width) => {
    const p = document.createElementNS(NS, 'path');
    p.setAttribute('d', d);
    p.setAttribute('stroke', color);
    p.setAttribute('stroke-width', width);
    p.setAttribute('fill', 'none');
    document.getElementById(id).appendChild(p);
  };
  const at = (x, t) => {
    const c = Math.min(838, Math.max(474, x));
    return c.toFixed(1) + ' ' + (top(c) + (bottom(c) - top(c)) * t).toFixed(1);
  };
  // Joins random points of the band t0..t1 with strokes of up to `reach` pixels.
  const web = (x0, x1, t0, t1, count, reach, color, width) => {
    let d = '';
    const t = () => t0 + rnd() * (t1 - t0);
    for (let i = 0; i < count; i++) {
      const x = x0 + rnd() * (x1 - x0);
      d += 'M' + at(x, t()) + 'L' + at(Math.min(x1, x + (rnd() - 0.2) * reach), t());
    }
    add('mesh', d, color, width);
  };
  const posts = (x0, x1, t0, step, color, width) => {
    let d = '';
    for (let x = x0; x < x1; x += step) {
      d += 'M' + at(x, t0) + 'L' + at(x, 1) + 'L' + at(Math.min(x1, x + step), t0);
    }
    add('mesh', d, color, width);
  };
  posts(474, 562, 0.1, 8, '#d98c8c', 0.8);
  web(474, 565, 0.1, 1, 75, 34, '#c98283', 0.8);
  web(545, 838, 0, 0.65, 280, 12, '#0e4f14', 1.3);
  web(560, 838, 0.2, 0.78, 190, 26, '#99603a', 0.9);
  web(540, 838, 0, 0.6, 170, 12, '#176b1f', 1);
  posts(556, 838, 0.74, 5, '#d84a45', 0.9);
  web(556, 838, 0.72, 1, 140, 14, '#e0605a', 0.8);
  add('mesh', 'M474 532L560 493', '#e79a96', 1);
  add('mesh', 'M560 493L838 368V342', '#d84a45', 1);

  let front = 'M432 463V503L474 532V500';
  const face = (x, t) => x + ' ' + ((470 + (x - 432) * 0.72) + t * 32).toFixed(1);
  for (let x = 432; x < 472; x += 5) {
    front += 'M' + face(x, rnd()) + 'L' + face(Math.min(474, x + 14), rnd());
    front += 'M' + face(x, 0) + 'L' + face(Math.min(474, x + 10), 1);
    front += 'M' + face(x, 1) + 'L' + face(Math.min(474, x + 18), 0.3);
    front += 'M' + face(x, 0.5) + 'L' + face(474, rnd());
  }
  add('mesh', front, '#d98c8c', 0.8);

  let green = '';
  let yellow = '';
  for (let x = 476; x < 768; x += 2) {
    green += 'M' + x + ' ' + (top(x) - 3 + rnd() * 3).toFixed(1) + 'l' + (rnd() * 5 - 3).toFixed(1) + ' ' + (2 + rnd() * 5).toFixed(1);
    if (rnd() > 0.5) yellow += 'M' + x + ' ' + (top(x) - 4).toFixed(1) + 'l-2 5';
  }
  for (let x = 433; x < 474; x += 2) {
    const y = 468 + (x - 433) * 0.75;
    green += 'M' + x + ' ' + y.toFixed(1) + 'l' + (rnd() * 4 - 2).toFixed(1) + ' 5';
    yellow += 'M' + x + ' ' + (y - 3).toFixed(1) + 'l1 5';
  }
  add('fringe', green, '#0f5f16', 1.2);
  add('fringe', yellow, '#f0e62c', 0.9);
})();
```
